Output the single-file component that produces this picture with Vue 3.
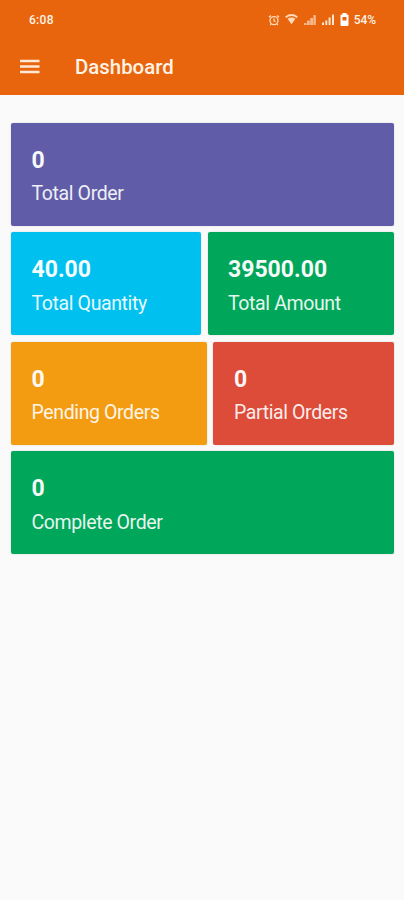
<template>
  <div class="screen">
    <header class="app-header">
      <div class="status-bar">
        <span class="time">6:08</span>
        <div class="status-icons">
          <svg class="alarm" width="12" height="12" viewBox="0 0 12 12">
            <circle cx="6" cy="6.6" r="4" />
            <path d="M6 4.4v2.4l1.5 1M1 3.2l2-1.8M11 3.2L9 1.4M3.2 10l-1 1M8.8 10l1 1" />
          </svg>
          <svg class="wifi" width="13" height="11" viewBox="0 0 13 11">
            <path class="solid" d="M2.5 4.8Q6.5 2.2 10.5 4.8L6.5 10.3z" />
            <path d="M.7 3.2Q6.5 -1.2 12.3 3.2" />
          </svg>
          <svg
            v-for="signal in signals"
            :key="signal.name"
            :class="signal.name"
            width="13"
            height="11"
            viewBox="0 0 13 11"
          >
            <path :d="signal.path" />
          </svg>
          <svg class="battery" width="9" height="13" viewBox="0 0 9 13">
            <path
              fill-rule="evenodd"
              d="M2.5 0h4v1.5h1q1 0 1 1v9.5q0 1-1 1h-6q-1 0-1-1v-9.5q0-1 1-1h1zM2.5 4v3.5h4v-3.5z"
            />
          </svg>
          <span class="percent">54%</span>
        </div>
      </div>
      <div class="toolbar">
        <button class="menu-btn" aria-label="Menu">
          <svg width="20" height="15" viewBox="0 0 20 15">
            <path d="M0 1.9h19.5M0 7.4h19.5M0 12.9h19.5" />
          </svg>
        </button>
        <h1>Dashboard</h1>
      </div>
    </header>

    <main class="cards">
      <div v-for="(row, index) in rows" :key="index" class="card-row">
        <div
          v-for="card in row"
          :key="card.label"
          class="card"
          :class="card.color"
        >
          <div class="value">{{ card.value }}</div>
          <div class="label">{{ card.label }}</div>
        </div>
      </div>
    </main>
  </div>
</template>

<script setup>
const signals = [
  { name: "signal-weak", path: "M0 11v-2h2.6v2zM3 11v-4.5h2.8v4.5zM6.2 11v-7h2.8v7zM9.4 11v-10h2.4v10z" },
  { name: "signal", path: "M0 11v-2.5h2v2.5zM3.3 11v-4.5h2v4.5zM6.6 11v-7.5h2v7.5zM10 11v-10.5h2v10.5z" },
];

const rows = [
  [{ value: "0", label: "Total Order", color: "purple" }],
  [
    { value: "40.00", label: "Total Quantity", color: "blue" },
    { value: "39500.00", label: "Total Amount", color: "green" },
  ],
  [
    { value: "0", label: "Pending Orders", color: "orange" },
    { value: "0", label: "Partial Orders", color: "red" },
  ],
  [{ value: "0", label: "Complete Order", color: "green" }],
];
</script>

<style>
body {
  margin: 0;
  background: #fafafa;
}
</style>

<style scoped>
.screen {
  min-height: 900px;
  background: #fafafa;
  font-family: Roboto, "Liberation Sans", sans-serif;
}

.app-header {
  height: 95px;
  background: #e8650d;
  color: #fff3e6;
}

.status-bar {
  display: flex;
  justify-content: space-between;
  align-items: center;
  height: 39px;
  padding: 0 28px 0 29px;
  box-sizing: border-box;
  font-size: 12px;
  font-weight: 500;
}

.time {
  letter-spacing: 0.3px;
}

.status-icons {
  display: flex;
  align-items: center;
}

.status-icons svg {
  fill: #ffe5cf;
}

.alarm {
  margin-right: 5px;
}

.status-icons .alarm,
.status-icons .wifi {
  fill: none;
  stroke: #ffd9b8;
  stroke-width: 1.3;
}

.status-icons .wifi {
  margin: 0 6px 1px 0;
  stroke-width: 1.8;
}

.wifi .solid {
  fill: #ffd9b8;
  stroke: none;
}

.signal-weak {
  margin-right: 5px;
  opacity: 0.65;
}

.signal {
  margin-right: 5px;
}

.status-icons .battery {
  margin: 0 5px 1px 0;
  fill: #fff;
}

.percent {
  letter-spacing: -0.1px;
}

.toolbar {
  display: flex;
  align-items: center;
  height: 56px;
  padding-left: 20px;
}

.menu-btn {
  display: flex;
  margin: 0 35px 2px 0;
  padding: 0;
  border: none;
  background: none;
}

.menu-btn svg {
  fill: none;
  stroke: #ffe9d6;
  stroke-width: 2.5;
}

.toolbar h1 {
  margin: 0;
  font-size: 20.4px;
  font-weight: 500;
}

.cards {
  display: flex;
  flex-direction: column;
  gap: 6.5px;
  padding: 27.5px 9.6px 0 11px;
}

.card-row {
  display: flex;
  gap: 6.5px;
}

.card {
  flex: 1 1 auto;
  height: 103px;
  padding: 24px 20.5px 0;
  box-sizing: border-box;
  border-radius: 2px;
  box-shadow: 0 0 2px rgba(0, 0, 0, 0.15);
  color: #fff;
}

.card:first-child:not(:last-child) {
  padding-right: 21px;
}

.value {
  font-size: 23px;
  font-weight: 700;
  line-height: 27px;
  opacity: 0.96;
}

.label {
  margin-top: 8.6px;
  font-size: 19.5px;
  line-height: 24px;
  letter-spacing: -0.38px;
  opacity: 0.9;
}

.purple {
  background: #605ca8;
}

.blue {
  background: #00c0ef;
}

.green {
  background: #00a65a;
}

.orange {
  background: #f39c12;
}

.red {
  background: #dd4b39;
}
</style>
